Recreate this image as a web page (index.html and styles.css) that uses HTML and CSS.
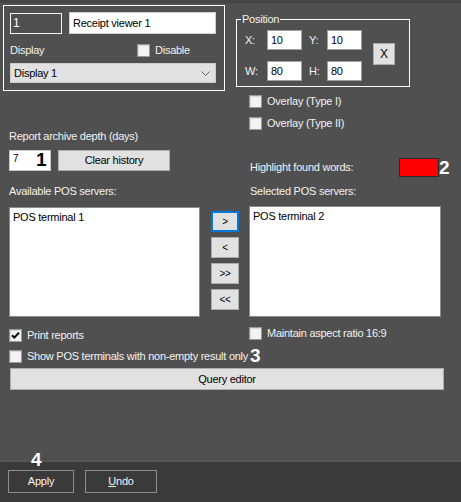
FILE: index.html
```html
<!DOCTYPE html>
<html>
<head>
<meta charset="utf-8">
<link rel="stylesheet" href="styles.css">
</head>
<body>
<div class="page">
  <div class="top">
    <div class="group">
      <div class="row1">
        <div class="field-id">1</div>
        <div class="field-name">Receipt viewer 1</div>
      </div>
      <div class="row2">
        <span class="lbl-display">Display</span>
        <div class="check"><span class="box"></span><span>Disable</span></div>
      </div>
      <div class="select">
        <span>Display 1</span>
        <svg class="chev" width="9" height="5" viewBox="0 0 9 5"><path d="M0.5 0.5 L4.5 4.5 L8.5 0.5" fill="none" stroke="#606060" stroke-width="1"/></svg>
      </div>
    </div>
    <div class="topright">
      <div class="pos">
        <span class="legend">Position</span>
        <div class="posgrid">
          <span class="plbl">X:</span><div class="num">10</div><span class="plbl second">Y:</span><div class="num">10</div>
          <div class="xbtn">X</div>
          <span class="plbl">W:</span><div class="num">80</div><span class="plbl second">H:</span><div class="num">80</div>
        </div>
      </div>
      <div class="check ov1"><span class="box"></span><span>Overlay (Type I)</span></div>
      <div class="check ov2"><span class="box"></span><span>Overlay (Type II)</span></div>
    </div>
  </div>

  <div class="depth">
    <div class="depth-left">
      <div class="lbl">Report archive depth (days)</div>
      <div class="depth-row">
        <div class="days">7</div>
        <div class="btn clear">Clear history</div>
      </div>
    </div>
    <div class="depth-right">
      <span class="hl-lbl">Highlight found words:</span>
      <span class="swatch"></span>
    </div>
  </div>

  <div class="lists">
    <div class="list-left">
      <div class="lbl">Available POS servers:</div>
      <div class="listbox left">POS terminal 1</div>
    </div>
    <div class="movers">
      <div class="btn mv focus">&gt;</div>
      <div class="btn mv">&lt;</div>
      <div class="btn mv">&gt;&gt;</div>
      <div class="btn mv">&lt;&lt;</div>
    </div>
    <div class="list-right">
      <div class="lbl sel">Selected POS servers:</div>
      <div class="listbox right">POS terminal 2</div>
    </div>
  </div>

  <div class="opts">
    <div class="check print"><span class="box checked"><svg width="11" height="11" viewBox="0 0 11 11"><path d="M2 5.2 L4.3 7.6 L9 2.6" fill="none" stroke="#000" stroke-width="2"/></svg></span><span>Print reports</span></div>
    <div class="check aspect"><span class="box"></span><span>Maintain aspect ratio 16:9</span></div>
    <div class="check show"><span class="box"></span><span>Show POS terminals with non-empty result only</span></div>
  </div>

  <div class="btn query">Query editor</div>

  <div class="footer">
    <div class="fbtn apply">Apply</div>
    <div class="fbtn undo"><u>U</u>ndo</div>
  </div>

  <span class="badge b1">1</span>
  <span class="badge b2">2</span>
  <span class="badge b3">3</span>
  <span class="badge b4">4</span>
</div>
</body>
</html>
```

FILE: styles.css
```css
* { box-sizing: border-box; }
html, body { margin: 0; padding: 0; background: #505050; }
.page {
  position: relative;
  width: 461px;
  height: 502px;
  background: #505050;
  border-top: 3px solid #454545;
  display: flex;
  flex-direction: column;
  font-family: "Liberation Sans", Arial, sans-serif;
  font-size: 11px;
  letter-spacing: -0.25px;
  line-height: 13px;
  color: #f2f2f2;
  overflow: hidden;
}

/* top */
.top { display: flex; height: 127px; }
.group {
  margin: 2px 0 0 3px;
  width: 222px;
  height: 86px;
  border: 1px solid #ffffff;
  padding: 6px 0 0 6px;
}
.row1 { display: flex; align-items: flex-start; }
.field-id {
  margin-top: 1px;
  width: 52px; height: 21px;
  border: 1px solid #f4f4f4;
  padding: 3px 0 0 2px;
  color: #ffffff;
  font-size: 12px;
}
.field-name {
  margin-left: 7px;
  width: 147px; height: 22px;
  background: #ffffff;
  border: 1px solid #d0d0d0;
  color: #000;
  padding: 4px 0 0 3px;
}
.row2 { display: flex; align-items: center; margin-top: 9px; height: 14px; }
.lbl-display { width: 127px; }
.check { display: flex; align-items: center; gap: 5px; height: 13px; white-space: nowrap; }
.box {
  width: 13px; height: 13px;
  flex: none;
  background: #f3f3f3;
  border: 1px solid #9a9a9a;
  box-shadow: inset 1px 1px 0 #d8d8d8;
  display: flex; align-items: center; justify-content: center;
}
.select {
  margin-top: 6px;
  width: 206px; height: 20px;
  background: #e1e1e1;
  border: 1px solid #cccccc;
  color: #000;
  display: flex; align-items: center; justify-content: space-between;
  padding: 0 5px 0 3px;
}

.topright { margin-left: 11px; display: flex; flex-direction: column; }
.pos {
  position: relative;
  margin-top: 16px;
  width: 174px; height: 69px;
  border: 1px solid #ffffff;
  padding: 10px 0 0 8px;
}
.legend {
  position: absolute;
  left: 4px; top: -7px;
  padding: 0 1px;
  background: #505050;
}
.posgrid {
  display: grid;
  grid-template-columns: 22px 35px 25px 35px 33px;
  grid-template-rows: 20px 20px;
  row-gap: 11px;
  align-items: center;
}
.plbl.second { padding-left: 7px; }
.num {
  height: 20px;
  background: #ffffff;
  border: 1px solid #a0a0a0;
  color: #000;
  padding: 3px 0 0 3px;
}
.xbtn {
  grid-column: 5; grid-row: 1 / span 2;
  justify-self: end;
  align-self: start;
  margin-top: 13px;
  width: 22px; height: 22px;
  background: #e1e1e1;
  border: 1px solid #adadad;
  color: #000;
  display: flex; align-items: center; justify-content: center;
  font-size: 12px;
}
.ov1 { margin: 8px 0 0 13px; }
.ov2 { margin: 9px 0 0 13px; }

/* depth */
.depth { display: flex; padding-left: 9px; height: 41px; }
.depth-left { width: 240px; }
.lbl { line-height: 13px; }
.depth-row { display: flex; margin-top: 7px; gap: 7px; }
.days {
  width: 42px; height: 21px;
  background: #ffffff;
  border: 1px solid #c8c8c8;
  color: #000;
  padding: 1px 0 0 3px;
  font-size: 10px;
}
.btn {
  background: #e1e1e1;
  border: 1px solid #adadad;
  color: #000;
  display: flex; align-items: center; justify-content: center;
}
.clear { width: 112px; height: 21px; }
.depth-right { display: flex; align-items: center; margin-top: 28px; height: 19px; }
.hl-lbl { width: 150px; padding-left: 1px; }
.swatch {
  width: 40px; height: 19px;
  background: #ff0000;
  border: 1px solid #2a2a2a;
}

/* lists */
.lists { display: flex; padding-left: 9px; margin-top: 14px; }
.list-left { width: 191px; }
.listbox {
  background: #ffffff;
  border: 1px solid #8c8c8c;
  color: #000;
  padding: 3px 3px;
}
.listbox.left { margin-top: 9px; height: 110px; }
.movers { margin: 26px 0 0 11px; width: 28px; display: flex; flex-direction: column; gap: 5px; }
.mv { height: 21px; font-size: 10px; }
.mv.focus { border: 2px solid #0078d7; }
.list-right { margin-left: 10px; width: 192px; }
.lbl.sel { padding-left: 1px; }
.listbox.right { margin-top: 8px; height: 111px; }

/* options */
.opts {
  display: grid;
  grid-template-columns: 240px 1fr;
  padding-left: 9px;
  margin-top: 10px;
  row-gap: 8px;
}
.print { margin-top: 2px; }
.aspect { margin-top: 0; }
.show { grid-column: 1 / span 2; }
.query { margin: 5px 0 0 10px; width: 434px; height: 22px; }

/* footer */
.footer {
  margin-top: auto;
  height: 41px;
  background: #3b3a3a;
  border-top: 1px solid #5a5a5a;
  display: flex;
  gap: 11px;
  padding: 8px 0 0 8px;
}
.fbtn {
  height: 23px;
  border: 1px solid #8e8e8e;
  color: #f2f2f2;
  display: flex; align-items: center; justify-content: center;
}
.apply { width: 66px; }
.undo { width: 72px; }

/* badges */
.badge {
  position: absolute;
  font-family: "Liberation Sans", Arial, sans-serif;
  font-weight: bold;
  font-size: 19px;
  line-height: 19px;
  letter-spacing: 0;
  color: #ffffff;
}
.badge.b1 { color: #000; left: 36px; top: 147px; }
.badge.b2 { left: 439px; top: 155px; }
.badge.b3 { left: 250px; top: 343px; }
.badge.b4 { left: 31px; top: 447px; }
```
